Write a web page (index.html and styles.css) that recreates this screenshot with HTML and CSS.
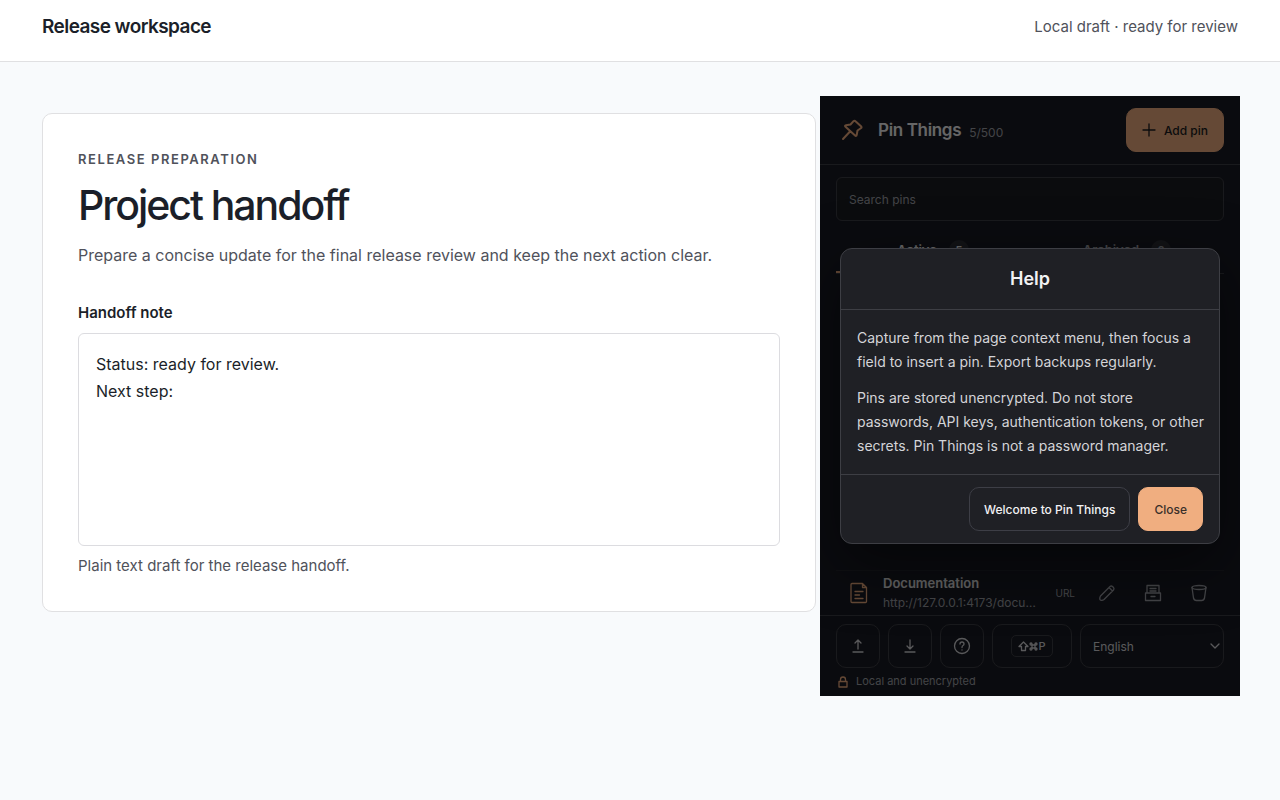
FILE: index.html
```html
<!DOCTYPE html>
<html lang="en">
<head>
  <meta charset="UTF-8">
  <title>Release workspace</title>
  <meta name="viewport" content="width=device-width, initial-scale=1.0">
  <link rel="stylesheet" href="styles.css">
</head>
<body>
  <header class="topbar">
    <strong class="brand">Release workspace</strong>
    <span class="draft-state">Local draft · ready for review</span>
  </header>

  <div class="workspace">
    <main class="card">
      <p class="eyebrow">Release preparation</p>
      <h1>Project handoff</h1>
      <p class="intro">Prepare a concise update for the final release review and keep the next action clear.</p>
      <label class="note-label" for="note">Handoff note</label>
      <textarea id="note" class="note">Status: ready for review.
Next step:</textarea>
      <p class="hint">Plain text draft for the release handoff.</p>
    </main>

    <aside class="panel">
      <header class="panel-header">
        <svg class="pin-logo" width="24" height="24" viewBox="0 0 24 24"><path d="M13.500 3.200q1-1 2 0l5.500 5q1.200 1.200-.2 2l-3.300 2.300-.7 4q-.4 2.300-2 .8L5.500 8.800q-1.200-1.200.5-1.500l4.500-.8zM10 13.500L3 21"/></svg>
        <h2 class="panel-title">Pin Things</h2>
        <span class="count">5/500</span>
        <button class="btn btn-accent add" type="button">
          <svg width="14" height="14" viewBox="0 0 14 14"><path d="M7 1v12M1 7h12"/></svg>
          Add pin
        </button>
      </header>

      <div class="search">
        <input type="search" placeholder="Search pins" aria-label="Search pins">
      </div>

      <nav class="tabs">
        <button class="tab active" type="button">Active <span class="badge">5</span></button>
        <button class="tab" type="button">Archived <span class="badge">0</span></button>
      </nav>

      <div class="list">
        <div class="row">
          <svg class="doc" width="24" height="24" viewBox="0 0 24 24"><path d="M5 2.500h10.500l4 4V20.500q0 1-1 1H5q-1 0-1-1v-17q0-1 1-1zM15.500 2.500v4h4M8 10.500h8M8 14h4.500M8 17.500h8"/></svg>
          <div class="row-text">
            <strong>Documentation</strong>
            <span>http://127.0.0.1:4173/documentation</span>
          </div>
          <span class="kind">URL</span>
          <button class="icon-btn" type="button" aria-label="Edit">
            <svg width="20" height="20" viewBox="0 0 20 20"><path d="M3.500 13L13 3.500q1.300-1 2.500 0l1 1q1 1.200 0 2.500L7 16.500q-1 .8-2.500.8-1.800 0-1.700-1.800 0-1.500.7-2.500zM12 4.500l3.500 3.500"/></svg>
          </button>
          <button class="icon-btn" type="button" aria-label="Archive">
            <svg width="20" height="20" viewBox="0 0 20 20"><path d="M4 10V2.500h12V10M2.500 10h15v7.500h-15zM7 5.500h6M7 8h6M8 13.500h4"/></svg>
          </button>
          <button class="icon-btn" type="button" aria-label="Delete">
            <svg width="20" height="20" viewBox="0 0 20 20"><ellipse cx="10" cy="4.500" rx="7" ry="2"/><path d="M3 4.500l1.500 10.500q.5 2.500 3 2.500h5q2.500 0 3-2.500L17 4.500"/></svg>
          </button>
        </div>
      </div>

      <footer class="panel-footer">
        <div class="tools">
          <button class="btn square" type="button" aria-label="Export">
            <svg width="20" height="20" viewBox="0 0 20 20"><path d="M10 13V4M7 7l3-3 3 3M5 16h10"/></svg>
          </button>
          <button class="btn square" type="button" aria-label="Import">
            <svg width="20" height="20" viewBox="0 0 20 20"><path d="M10 4v9M7 10l3 3 3-3M5 16h10"/></svg>
          </button>
          <button class="btn square" type="button" aria-label="Help">
            <svg width="20" height="20" viewBox="0 0 20 20"><circle cx="10" cy="10" r="7.500"/><path d="M8 8q0-2 2-2t2 2q0 1-1 1.500t-1 2M10 13.800v.2"/></svg>
          </button>
          <button class="btn shortcut" type="button" aria-label="Shortcut">
            <kbd><svg width="11" height="11" viewBox="0 0 11 11"><path d="M5.500 1l4.500 4.500H7.500V9.500h-4V5.500H1z"/></svg><svg width="9" height="9" viewBox="0 0 9 9"><path d="M3 3V2a1 1 0 1 0-1 1h5a1 1 0 1 0-1-1v5a1 1 0 1 0 1-1H2a1 1 0 1 0 1 1z"/></svg>P</kbd>
          </button>
          <div class="lang">
            <select aria-label="Language"><option>English</option></select>
            <svg width="10" height="10" viewBox="0 0 10 10"><path d="M1 3l4 4 4-4"/></svg>
          </div>
        </div>
        <p class="storage">
          <svg width="13" height="12" viewBox="0 0 13 12"><path d="M3 5.500h8v5.500H3zM4.500 5.500V3.500a2.500 2.500 0 0 1 5 0v2"/></svg>
          Local and unencrypted
        </p>
      </footer>

      <div class="backdrop">
        <section class="dialog" role="dialog" aria-labelledby="help-title">
          <h2 id="help-title" class="dialog-title">Help</h2>
          <div class="dialog-body">
            <p>Capture from the page context menu, then focus a field to insert a pin. Export backups regularly.</p>
            <p>Pins are stored unencrypted. Do not store passwords, API keys, authentication tokens, or other secrets. Pin Things is not a password manager.</p>
          </div>
          <div class="dialog-actions">
            <button class="btn" type="button">Welcome to Pin Things</button>
            <button class="btn btn-accent" type="button">Close</button>
          </div>
        </section>
      </div>
    </aside>
  </div>
</body>
</html>
```
FILE: styles.css
```css
* {
  box-sizing: border-box;
}

body {
  margin: 0;
  min-height: 100vh;
  background: #f8fafc;
  color: #1b1f29;
  font-family: Inter, sans-serif;
}

h1, h2, p {
  margin: 0;
}

button, input, select, textarea {
  font: inherit;
  color: inherit;
}

svg {
  flex: none;
  fill: none;
  stroke: currentColor;
  stroke-width: 1.3;
  stroke-linecap: round;
  stroke-linejoin: round;
}

.topbar {
  display: flex;
  justify-content: space-between;
  align-items: center;
  padding: 14px 42px 21px;
  background: #fff;
  border-bottom: 1px solid #e0e0e2;
  line-height: 26px;
}

.brand {
  font-size: 19px;
  font-weight: 600;
  letter-spacing: -0.03em;
}

.draft-state {
  font-size: 15px;
  color: #50525b;
}

.workspace {
  display: flex;
  align-items: flex-start;
  gap: 4px;
  padding: 34px 40px 0 42px;
}

/* document card */
.card {
  flex: 1;
  min-width: 0;
  margin-top: 17px;
  padding: 34px 35px 33px;
  background: #fff;
  border: 1px solid #e0e0e2;
  border-radius: 10px;
}

.eyebrow {
  font-size: 13px;
  line-height: 22px;
  font-weight: 600;
  letter-spacing: 0.12em;
  text-transform: uppercase;
  color: #50525b;
}

h1 {
  margin-top: 11px;
  font-size: 41px;
  line-height: 48px;
  font-weight: 500;
  letter-spacing: -0.05em;
}

.intro {
  margin-top: 12px;
  font-size: 16px;
  line-height: 28px;
  color: #50525b;
}

.note-label {
  display: block;
  margin-top: 32px;
  font-size: 15px;
  line-height: 24px;
  font-weight: 600;
}

.note {
  display: block;
  width: 100%;
  height: 213px;
  margin-top: 8px;
  padding: 17px;
  border: 1px solid #dcdce0;
  border-radius: 6px;
  background: #fff;
  font-size: 16px;
  line-height: 27px;
  resize: none;
}

.hint {
  margin-top: 8px;
  font-size: 15px;
  line-height: 24px;
  color: #50525b;
}

/* pin panel */
.panel {
  position: relative;
  display: flex;
  flex-direction: column;
  flex: 0 0 420px;
  height: 600px;
  background: #1a1c24;
  color: #f2f2f4;
  overflow: hidden;
}

.panel-header {
  display: flex;
  align-items: center;
  padding: 12px 16px;
  border-bottom: 1px solid #3d3e46;
}

.pin-logo {
  margin: 0 14px 0 4px;
  stroke-width: 2;
  color: #f0ae80;
}

.panel-title {
  font-size: 17px;
  font-weight: 600;
  letter-spacing: -0.02em;
}

.count {
  margin: 4px auto 0 8px;
  font-size: 12px;
  color: #a0a2aa;
}

.btn {
  display: flex;
  align-items: center;
  justify-content: center;
  height: 44px;
  padding: 0 14px;
  background: transparent;
  border: 1px solid #3d3e46;
  border-radius: 10px;
  font-size: 12px;
  font-weight: 500;
}

.btn-accent {
  padding: 0 15px;
  background: #f0ae80;
  border-color: #f0ae80;
  color: #3a2f2a;
}

.add {
  gap: 8px;
  color: #1b1c20;
}

.search {
  padding: 12px 16px 8px;
}

.search input {
  display: block;
  width: 100%;
  height: 44px;
  padding: 0 12px;
  background: #1c1e22;
  border: 1px solid #3d3e46;
  border-radius: 6px;
  font-size: 12px;
}

.search input::placeholder {
  color: #a0a2aa;
}

.tabs {
  display: flex;
  margin: 0 16px;
  border-bottom: 1px solid #3d3e46;
}

.tab {
  display: flex;
  flex: 1;
  align-items: center;
  justify-content: center;
  gap: 12px;
  height: 44px;
  background: transparent;
  border: 0;
  border-bottom: 2px solid transparent;
  font-size: 13px;
  font-weight: 600;
  color: #a0a2aa;
}

.tab.active {
  border-color: #f0ae80;
  color: #f2f2f4;
}

.badge {
  min-width: 20px;
  border-radius: 10px;
  background: #2c2e35;
  font-size: 11px;
  line-height: 20px;
}

.list {
  display: flex;
  flex: 1;
  flex-direction: column;
  justify-content: flex-end;
  min-height: 0;
  padding: 0 16px;
}

.row {
  display: flex;
  align-items: center;
  border-top: 1px solid #25272e;
  padding: 0 2px 0 11px;
}

.doc {
  color: #f0ae80;
}

.row-text {
  display: flex;
  flex: 1;
  flex-direction: column;
  min-width: 0;
  margin-left: 12px;
  font-size: 12px;
  line-height: 20px;
  color: #a0a2aa;
}

.row-text strong {
  font-size: 13px;
  font-weight: 600;
  color: #e6e6ea;
}

.row-text span {
  overflow: hidden;
  text-overflow: ellipsis;
}

.kind {
  margin: 0 9px 0 18px;
  font-size: 10px;
  color: #a0a2aa;
}

.icon-btn {
  display: grid;
  place-items: center;
  width: 46px;
  height: 44px;
  padding: 0;
  background: transparent;
  border: 0;
  color: #a0a2aa;
}

.panel-footer {
  padding: 8px 16px 6px;
  border-top: 1px solid #3d3e46;
}

.tools {
  display: flex;
  gap: 8px;
}

.tools .btn, .lang {
  color: #d4d4d8;
}

.square {
  width: 44px;
  padding: 0;
}

.shortcut {
  width: 80px;
  padding: 0;
}

.shortcut kbd {
  display: flex;
  align-items: center;
  padding: 0 6px;
  border: 1px solid #3d3e46;
  border-radius: 5px;
  font-family: inherit;
  font-size: 11px;
  line-height: 20px;
}

.lang {
  display: flex;
  flex: 1;
  align-items: center;
  border: 1px solid #3d3e46;
  border-radius: 10px;
  padding-right: 3px;
}

.lang select {
  appearance: none;
  flex: 1;
  height: 42px;
  padding: 0 12px;
  background: transparent;
  border: 0;
  font-size: 12px;
}

.storage {
  display: flex;
  align-items: center;
  gap: 7px;
  margin-top: 5px;
  font-size: 11px;
  line-height: 17px;
  color: #a0a2aa;
}

.storage svg {
  color: #f0ae80;
}

/* help dialog over the panel */
.backdrop {
  position: absolute;
  inset: 0;
  display: flex;
  align-items: center;
  padding: 0 20px;
  background: rgba(0, 0, 0, 0.58);
}

.dialog {
  width: 100%;
  background: #1f2025;
  border: 1px solid #3d3e44;
  border-radius: 12px;
  box-shadow: 0 20px 60px rgba(0, 0, 0, 0.5);
}

.dialog-title {
  padding: 16px;
  border-bottom: 1px solid #3d3e44;
  font-size: 18px;
  line-height: 28px;
  font-weight: 600;
  text-align: center;
}

.dialog-body {
  padding: 16px 12px 16px 16px;
  font-size: 14px;
  line-height: 24px;
  color: #d4d4d8;
}

.dialog-body p + p {
  margin-top: 12px;
}

.dialog-actions {
  display: flex;
  justify-content: flex-end;
  gap: 8px;
  padding: 12px 16px;
  border-top: 1px solid #3d3e44;
}
```
